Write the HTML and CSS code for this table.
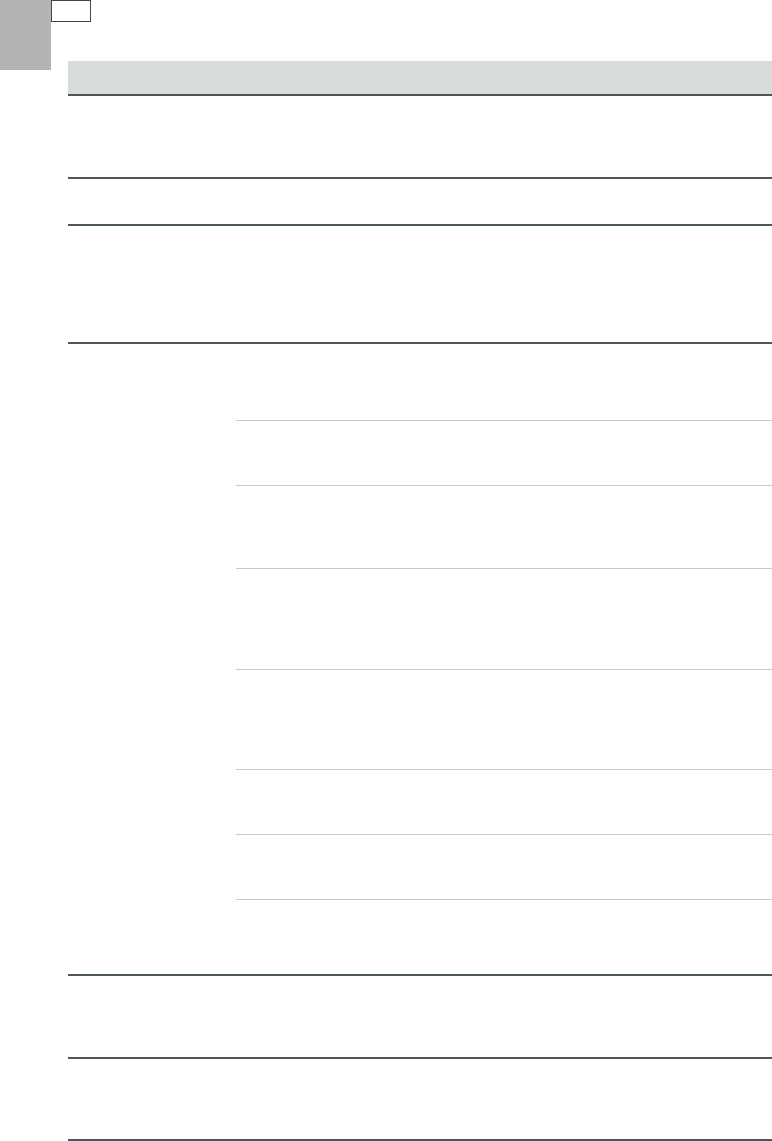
FILE: index.html
```html
<!DOCTYPE html>
<html lang="en">
<head>
    <meta charset="UTF-8">
    <meta name="viewport" content="width=device-width, initial-scale=1.0">
    <title>Table</title>
    <link rel="stylesheet" href="styles.css">
</head>
<body>
    <div class="page">
        <div class="side-tab"></div>
        <div class="main">
            <div class="page-tag"></div>
            <div class="spec-table">
                <div class="head-row"></div>
                <div class="row row-a"></div>
                <div class="row row-b"></div>
                <div class="row row-c"></div>
                <div class="row row-split">
                    <div class="label-cell"></div>
                    <div class="sub-list">
                        <div class="sub-row sub-1"></div>
                        <div class="sub-row sub-2"></div>
                        <div class="sub-row sub-3"></div>
                        <div class="sub-row sub-4"></div>
                        <div class="sub-row sub-5"></div>
                        <div class="sub-row sub-6"></div>
                        <div class="sub-row sub-7"></div>
                        <div class="sub-row sub-8"></div>
                    </div>
                </div>
                <div class="row row-d"></div>
                <div class="row row-e"></div>
            </div>
        </div>
    </div>
</body>
</html>
```

FILE: styles.css
```css
/* page frame */
body {
    margin: 0;
    background: #ffffff;
    font-family: "Liberation Sans", Arial, sans-serif;
}

.page {
    display: flex;
    align-items: flex-start;
}

.side-tab {
    width: 51px;
    height: 70px;
    flex-shrink: 0;
    background-color: #b3b5b3;
}

.main {
    flex: 1;
}

.page-tag {
    width: 38px;
    height: 20px;
    border: 1px solid #3c4a50;
}

/* table */
.spec-table {
    margin-left: 17px;
    margin-top: 39px;
}

.head-row {
    height: 33px;
    background-color: #d8dcdb;
    border-bottom: 2px solid #4a575c;
}

.row {
    border-bottom: 2px solid #4a575c;
}

.row-a { height: 81px; }
.row-b { height: 45px; }
.row-c { height: 116px; }
.row-d { height: 81px; }
.row-e { height: 80px; }

.row-split {
    display: grid;
    grid-template-columns: 168px 1fr;
}

.sub-row {
    border-bottom: 1px solid #c8c8c8;
}

.sub-row:last-child {
    border-bottom: none;
}

.sub-1 { height: 76px; }
.sub-2 { height: 64px; }
.sub-3 { height: 82px; }
.sub-4 { height: 100px; }
.sub-5 { height: 99px; }
.sub-6 { height: 64px; }
.sub-7 { height: 64px; }
.sub-8 { height: 74px; }
```
